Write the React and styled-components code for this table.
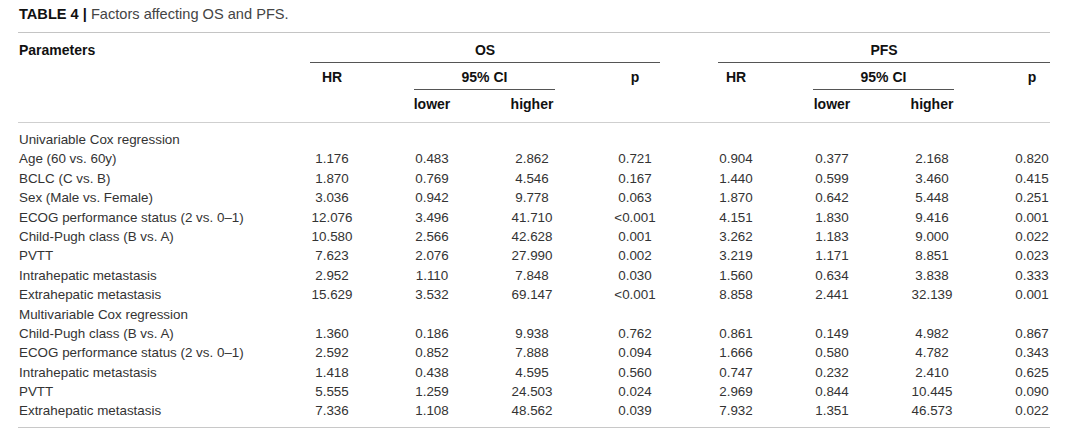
import React from "react";
import styled, { createGlobalStyle } from "styled-components";

const Global = createGlobalStyle`
  html, body { margin: 0; padding: 0; background: #fff; }
  body { font-family: "Liberation Sans", Arial, sans-serif; color: #333; }
`;

const Page = styled.div`
  width: 1032px;
  padding: 6px 0 0 18px;
`;

const Caption = styled.div`
  font-size: 14.6px;
  line-height: 16px;
  padding-left: 1px;
  margin-bottom: 10px;
  color: #444;
  b { color: #111; font-weight: 700; }
`;

const COLS = "264px 100px 100px 100px 106px 96px 96px 104px 66px";

const Head = styled.div`
  display: grid;
  grid-template-columns: ${COLS};
  border-top: 1px solid #c4c4c4;
  border-bottom: 1px solid #cfcfcf;
  padding-bottom: 9px;
  font-size: 14px;
  line-height: 16px;
  font-weight: 700;
  color: #111;
`;

const HeadCell = styled.div`
  grid-column: ${(p) => p.$col};
  grid-row: ${(p) => p.$row};
  padding-top: ${(p) => (p.$row === 1 ? "9px" : "6px")};
  padding-bottom: ${(p) => (p.$row === 3 ? "0" : "4px")};
  margin: ${(p) => p.$inset || "0"};
  text-align: ${(p) => (p.$left ? "left" : "center")};
  padding-left: ${(p) => (p.$left ? "1px" : p.$pl || "0")};
  border-bottom: 1px solid ${(p) => (p.$rule ? "#555" : "transparent")};
  white-space: nowrap;
`;

const Body = styled.div`
  display: grid;
  grid-template-columns: ${COLS};
  grid-auto-rows: 19.4px;
  padding: 7px 0 6px;
  border-bottom: 1px solid #c8c8c8;
  font-size: 13.4px;
  line-height: 19.4px;
  color: #333;
`;

const Label = styled.div`
  padding-left: 1px;
  white-space: nowrap;
  grid-column: ${(p) => (p.$section ? "1 / -1" : "auto")};
`;

const Num = styled.div`
  text-align: center;
  white-space: nowrap;
  padding-left: ${(p) => p.$pl || "0"};
`;

const uni = [
  ["Age (60 vs. 60y)", "1.176", "0.483", "2.862", "0.721", "0.904", "0.377", "2.168", "0.820"],
  ["BCLC (C vs. B)", "1.870", "0.769", "4.546", "0.167", "1.440", "0.599", "3.460", "0.415"],
  ["Sex (Male vs. Female)", "3.036", "0.942", "9.778", "0.063", "1.870", "0.642", "5.448", "0.251"],
  ["ECOG performance status (2 vs. 0–1)", "12.076", "3.496", "41.710", "<0.001", "4.151", "1.830", "9.416", "0.001"],
  ["Child-Pugh class (B vs. A)", "10.580", "2.566", "42.628", "0.001", "3.262", "1.183", "9.000", "0.022"],
  ["PVTT", "7.623", "2.076", "27.990", "0.002", "3.219", "1.171", "8.851", "0.023"],
  ["Intrahepatic metastasis", "2.952", "1.110", "7.848", "0.030", "1.560", "0.634", "3.838", "0.333"],
  ["Extrahepatic metastasis", "15.629", "3.532", "69.147", "<0.001", "8.858", "2.441", "32.139", "0.001"],
];

const multi = [
  ["Child-Pugh class (B vs. A)", "1.360", "0.186", "9.938", "0.762", "0.861", "0.149", "4.982", "0.867"],
  ["ECOG performance status (2 vs. 0–1)", "2.592", "0.852", "7.888", "0.094", "1.666", "0.580", "4.782", "0.343"],
  ["Intrahepatic metastasis", "1.418", "0.438", "4.595", "0.560", "0.747", "0.232", "2.410", "0.625"],
  ["PVTT", "5.555", "1.259", "24.503", "0.024", "2.969", "0.844", "10.445", "0.090"],
  ["Extrahepatic metastasis", "7.336", "1.108", "48.562", "0.039", "7.932", "1.351", "46.573", "0.022"],
];

function Row({ r }) {
  return (
    <>
      <Label>{r[0]}</Label>
      {r.slice(1).map((v, i) => (
        <Num key={i} $pl={i === 7 ? "30px" : "0"}>
          {v}
        </Num>
      ))}
    </>
  );
}

export default function App() {
  return (
    <Page>
      <Global />
      <Caption>
        <b>TABLE 4 |</b> Factors affecting OS and PFS.
      </Caption>
      <Head>
        <HeadCell $col="1" $row={1} $left>Parameters</HeadCell>
        <HeadCell $col="2 / 6" $row={1} $rule $inset="0 28px 0 28px">OS</HeadCell>
        <HeadCell $col="6 / 10" $row={1} $rule $inset="0 0 0 30px">PFS</HeadCell>

        <HeadCell $col="2" $row={2}>HR</HeadCell>
        <HeadCell $col="3 / 5" $row={2} $rule $inset="0 27px 0 32px">95% CI</HeadCell>
        <HeadCell $col="5" $row={2}>p</HeadCell>
        <HeadCell $col="6" $row={2}>HR</HeadCell>
        <HeadCell $col="7 / 9" $row={2} $rule $inset="0 30px 0 29px">95% CI</HeadCell>
        <HeadCell $col="9" $row={2} $pl="30px">p</HeadCell>

        <HeadCell $col="3" $row={3}>lower</HeadCell>
        <HeadCell $col="4" $row={3}>higher</HeadCell>
        <HeadCell $col="7" $row={3}>lower</HeadCell>
        <HeadCell $col="8" $row={3}>higher</HeadCell>
      </Head>
      <Body>
        <Label $section>Univariable Cox regression</Label>
        {uni.map((r) => (
          <Row key={"u" + r[0]} r={r} />
        ))}
        <Label $section>Multivariable Cox regression</Label>
        {multi.map((r) => (
          <Row key={"m" + r[0]} r={r} />
        ))}
      </Body>
    </Page>
  );
}
